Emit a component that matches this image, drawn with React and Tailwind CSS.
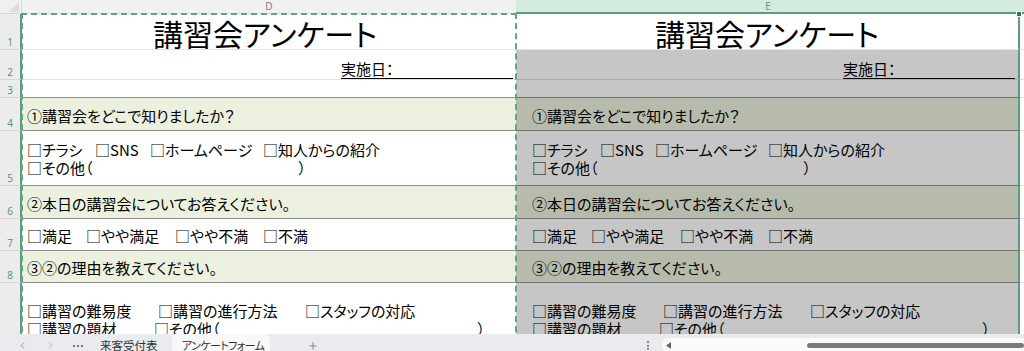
import React from "react";
import { ChevronLeft, ChevronRight, Plus } from "lucide-react";

const HDR =
  "w-[22px] shrink-0 bg-[#ececec] border-r-2 border-r-[#5d9d7a] border-b border-b-[#d6d6d6] flex items-end justify-center pb-[2px] text-[10px] leading-none text-[#5b8c70] font-['Open_Sans',sans-serif]";

function Row({ h, n, dark, green, eWhite, d, e }) {
  const dBg = green ? "bg-[#ebf1de]" : "bg-white";
  const eBg = green ? "bg-[#b6bbac]" : eWhite ? "bg-white" : "bg-[#c6c6c6]";
  const dB = dark ? "border-b-[#8f8f8f]" : "border-b-[#e2e2e2]";
  const eB = dark ? "border-b-[#727272]" : eWhite ? "border-b-[#e2e2e2]" : "border-b-[#adadad]";
  return (
    <div className={`flex shrink-0 ${h}`}>
      <div className={HDR}>{n}</div>
      <div className={`w-[494px] shrink-0 border-b ${dB} ${dBg} overflow-hidden`}>{d}</div>
      <div className={`w-[504px] shrink-0 border-b border-r-2 border-r-[#5d9d7a] ${eB} ${eBg} overflow-hidden`}>{e}</div>
      <div className="flex-1 bg-white border-b border-b-[#e2e2e2]" />
    </div>
  );
}

function Title({ pad }) {
  return (
    <div className={`h-full flex items-center justify-center pt-[3px] ${pad} text-[30px] leading-none whitespace-nowrap`}>
      講習会アンケート
    </div>
  );
}

function DateCell() {
  return (
    <div className="h-full flex items-end justify-end pr-[3px]">
      <span className="w-[172px] border-b border-b-black text-[15px] leading-[18px] whitespace-nowrap">実施日：</span>
    </div>
  );
}

function Q({ pad, children }) {
  return (
    <div className={`h-full flex items-center pt-[3px] ${pad} text-[15px] leading-[18px] whitespace-nowrap`}>
      {children}
    </div>
  );
}

function R5({ pad }) {
  return (
    <div className={`h-full flex flex-col justify-center pt-[1px] ${pad} text-[15px] leading-[18px] whitespace-nowrap`}>
      <div className="flex">
        <span className="w-[68px] shrink-0">□チラシ</span>
        <span className="w-[55px] shrink-0">□SNS</span>
        <span className="w-[113px] shrink-0">□ホームページ</span>
        <span>□知人からの紹介</span>
      </div>
      <div className="flex">
        <span>□その他（</span>
        <span className="w-[206px] shrink-0" />
        <span>）</span>
      </div>
    </div>
  );
}

function R7({ pad }) {
  return (
    <div className={`h-full flex items-center pt-[2px] ${pad} text-[15px] leading-[18px] whitespace-nowrap`}>
      <span className="w-[59px] shrink-0">□満足</span>
      <span className="w-[89px] shrink-0">□やや満足</span>
      <span className="w-[88px] shrink-0">□やや不満</span>
      <span>□不満</span>
    </div>
  );
}

function R9({ pad }) {
  return (
    <div className={`h-full flex flex-col pt-[19px] ${pad} text-[15px] leading-[18px] whitespace-nowrap`}>
      <div className="flex">
        <span className="w-[131px] shrink-0">□講習の難易度</span>
        <span className="w-[147px] shrink-0">□講習の進行方法</span>
        <span>□スタッフの対応</span>
      </div>
      <div className="flex">
        <span className="w-[127px] shrink-0">□講習の題材</span>
        <span>□その他（</span>
        <span className="w-[258px] shrink-0" />
        <span>）</span>
      </div>
    </div>
  );
}

const pD = "pl-[5px]";
const pE = "pl-[16px]";

export default function App() {
  return (
    <div className="w-[1024px] h-[351px] overflow-hidden bg-white text-black font-['Noto_Sans_CJK_JP',sans-serif] [font-feature-settings:'palt'] flex flex-col">
      <div className="relative h-[334px] shrink-0 overflow-hidden flex flex-col">
        {/* column headers */}
        <div className="flex h-[14px] shrink-0">
          <div className="w-[22px] shrink-0 bg-[#f0f0f0] border-r border-r-[#d6d6d6] border-b border-b-[#d6d6d6] flex items-start justify-start">
            <svg width="21" height="13" viewBox="0 0 21 13">
              <polygon points="19,2 19,12 9,12" fill="#dcdcdc" />
            </svg>
          </div>
          <div className="w-[494px] shrink-0 bg-[#f1f1f1] border-b border-b-[#d4d4d4] text-center text-[10px] leading-[13px] text-[#7a7a7a] font-['Open_Sans',sans-serif]">
            D
          </div>
          <div className="flex-1 bg-[#d3ecdf] border-b-2 border-b-[#5d9d7a] text-center pr-[4px] text-[10px] leading-[12px] text-[#5f9479] font-['Open_Sans',sans-serif]">
            E
          </div>
        </div>

        <Row h="h-[36px]" n="1" eWhite d={<Title pad="pr-[8px]" />} e={<Title pad="" />} />
        <Row h="h-[30px]" n="2" d={<DateCell />} e={<DateCell />} />
        <Row h="h-[18px]" n="3" dark d={null} e={null} />
        <Row
          h="h-[33px]"
          n="4"
          dark
          green
          d={<Q pad={pD}>①講習会をどこで知りましたか？</Q>}
          e={<Q pad={pE}>①講習会をどこで知りましたか？</Q>}
        />
        <Row h="h-[55px]" n="5" dark d={<R5 pad={pD} />} e={<R5 pad={pE} />} />
        <Row
          h="h-[33px]"
          n="6"
          dark
          green
          d={<Q pad={pD}>②本日の講習会についてお答えください。</Q>}
          e={<Q pad={pE}>②本日の講習会についてお答えください。</Q>}
        />
        <Row h="h-[32px]" n="7" dark d={<R7 pad={pD} />} e={<R7 pad={pE} />} />
        <Row
          h="h-[32px]"
          n="8"
          dark
          green
          d={<Q pad={pD}>③②の理由を教えてください。</Q>}
          e={<Q pad={pE}>③②の理由を教えてください。</Q>}
        />
        <Row h="h-[80px]" n="9" d={<R9 pad={pD} />} e={<R9 pad={pE} />} />

        {/* copy marquee around column D */}
        <div className="absolute left-[21px] top-[13px] w-[496px] h-[400px] border-2 border-dashed border-[#62a582] pointer-events-none" />
        {/* fill handle */}
        <div className="absolute left-[1016px] top-[11px] w-[6px] h-[6px] bg-[#2f7d55] border border-white" />
      </div>

      {/* sheet tab bar */}
      <div className="h-[17px] shrink-0 bg-[#e9ebee] overflow-hidden">
        <div className="h-[23px] flex items-center text-[11.5px] text-[#333] whitespace-nowrap">
          <div className="w-[16px] shrink-0" />
          <div className="w-[12px] shrink-0 flex justify-center">
            <ChevronLeft size={11} strokeWidth={1.5} color="#6b6b6b" />
          </div>
          <div className="w-[16px] shrink-0" />
          <div className="w-[12px] shrink-0 flex justify-center">
            <ChevronRight size={11} strokeWidth={1.5} color="#9a9a9a" />
          </div>
          <div className="w-[17px] shrink-0" />
          <div className="w-[11px] shrink-0 flex gap-[2px] items-center">
            <span className="w-[2px] h-[2px] rounded-full bg-[#555]" />
            <span className="w-[2px] h-[2px] rounded-full bg-[#555]" />
            <span className="w-[2px] h-[2px] rounded-full bg-[#555]" />
          </div>
          <div className="w-[16px] shrink-0" />
          <span className="w-[72px] shrink-0">来客受付表</span>
          <div className="w-[98px] shrink-0 h-full bg-[#f8f8f9] rounded-t-[6px] flex items-center pl-[10px] text-[11px] tracking-[-0.6px]">
            アンケートフォーム
          </div>
          <div className="w-[37px] shrink-0" />
          <div className="w-[12px] shrink-0 flex justify-center">
            <Plus size={12} strokeWidth={1.2} color="#555" />
          </div>
          <div className="w-[324px] shrink-0" />
          <div className="w-[10px] shrink-0 flex flex-col items-center gap-[1.5px]">
            <span className="w-[2px] h-[2px] rounded-full bg-[#666]" />
            <span className="w-[2px] h-[2px] rounded-full bg-[#666]" />
            <span className="w-[2px] h-[2px] rounded-full bg-[#666]" />
          </div>
          <div className="w-[9px] shrink-0" />
          <div className="flex-1 h-[15px] bg-[#fafafa] rounded-l-[8px] flex items-center">
            <div className="w-[4px] shrink-0" />
            <svg width="5" height="7" viewBox="0 0 5 7">
              <polygon points="5,0 5,7 0,3.5" fill="#666" />
            </svg>
            <div className="w-[136px] shrink-0" />
            <div className="flex-1 h-[5px] rounded-full bg-[#7b7b7b]" />
          </div>
        </div>
      </div>
    </div>
  );
}
